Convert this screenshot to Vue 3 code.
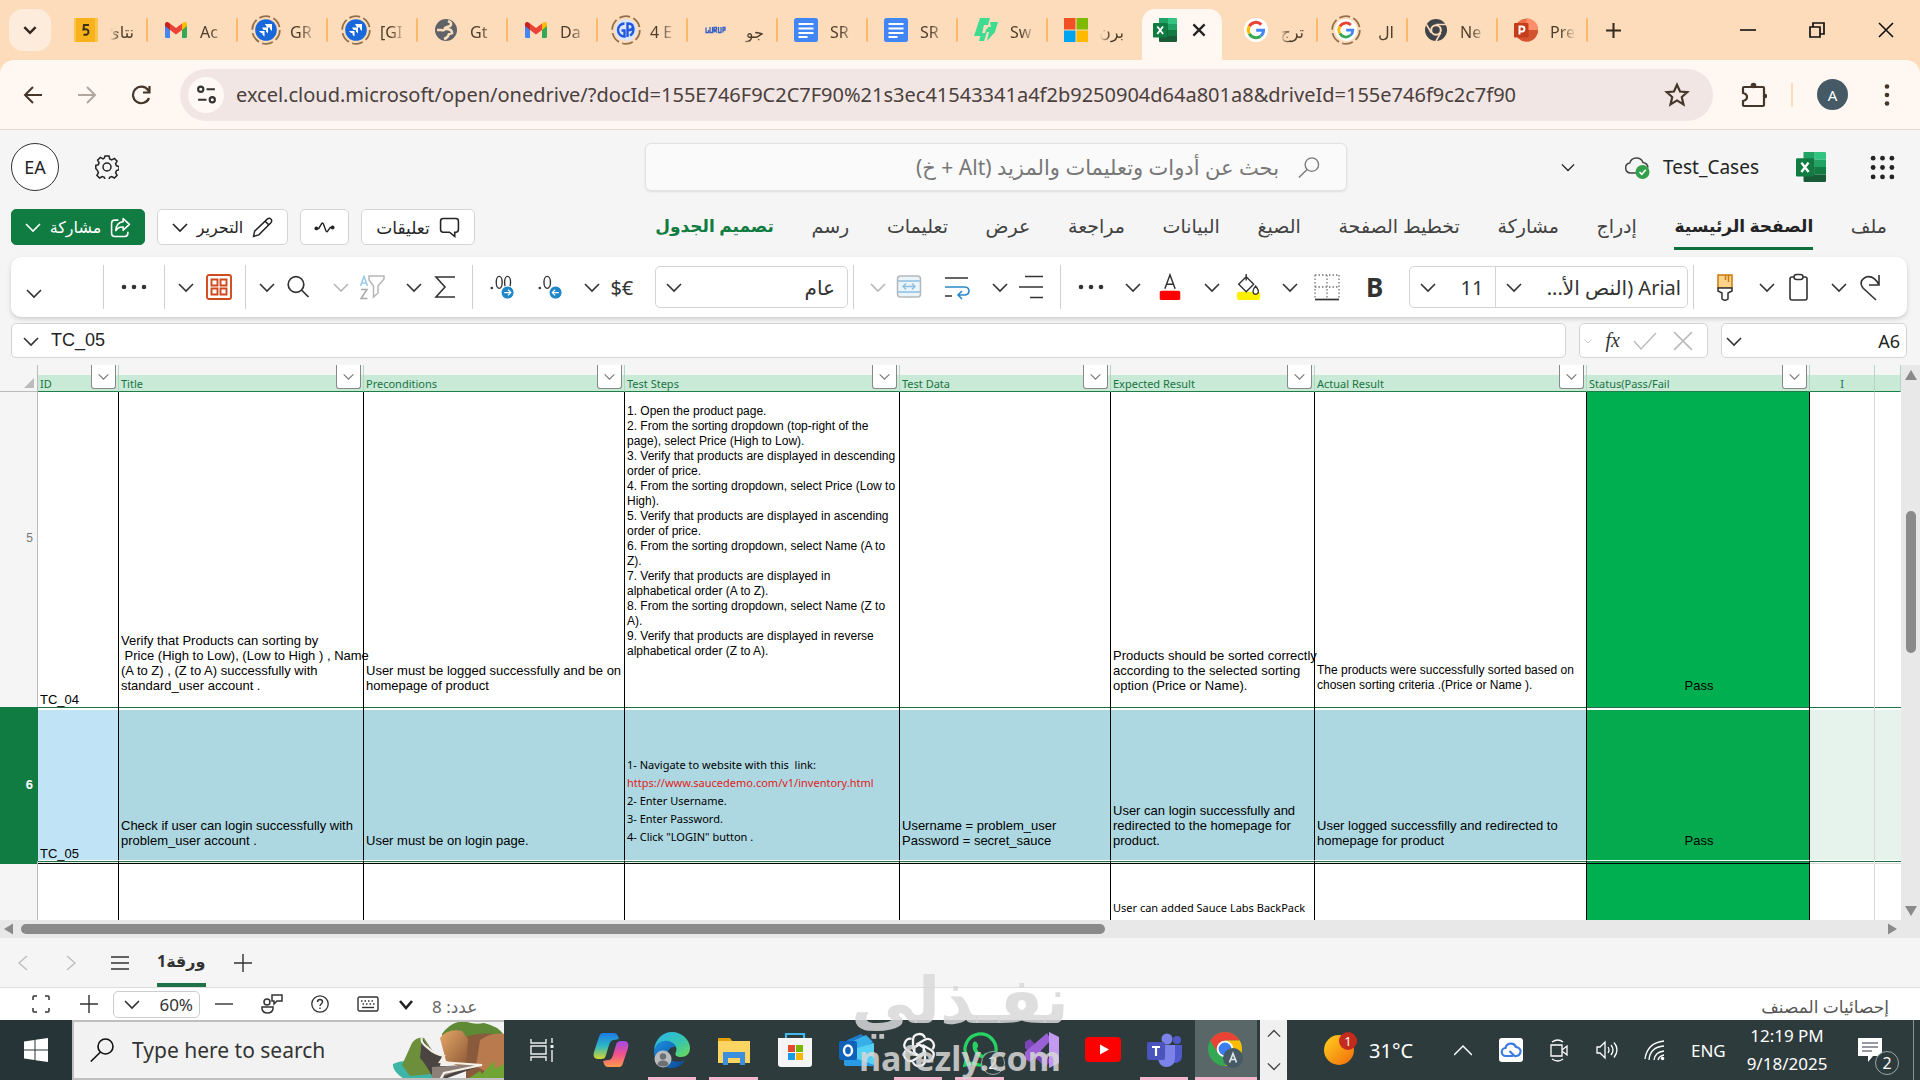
<script setup>
import { ref } from 'vue'

const browserTabs = [
  { icon: 'five', title: 'نتائ', rtl: true },
  { icon: 'gmail', title: 'Ac' },
  { icon: 'jira', title: 'GR' },
  { icon: 'jira', title: '[GI' },
  { icon: 'globe', title: 'Gt' },
  { icon: 'gmail', title: 'Da' },
  { icon: 'gp', title: '4 E' },
  { icon: 'guru', title: 'جو', rtl: true },
  { icon: 'docs', title: 'SR' },
  { icon: 'docs', title: 'SR' },
  { icon: 'swag', title: 'Sw' },
  { icon: 'ms', title: 'برن', rtl: true },
  { icon: 'excel', title: '', active: true },
  { icon: 'google', title: 'ترج', rtl: true },
  { icon: 'googlering', title: 'ال', rtl: true },
  { icon: 'chromegray', title: 'Ne' },
  { icon: 'ppt', title: 'Pre' },
]

const ribbonTabs = [
  'ملف', 'الصفحة الرئيسية', 'إدراج', 'مشاركة', 'تخطيط الصفحة', 'الصيغ',
  'البيانات', 'مراجعة', 'عرض', 'تعليمات', 'رسم', 'تصميم الجدول',
]
const activeTab = ref('الصفحة الرئيسية')

const columns = ['ID', 'Title', 'Preconditions', 'Test Steps', 'Test Data', 'Expected Result', 'Actual Result', 'Status(Pass/Fail']

const rows = [
  {
    number: 5,
    name: 'first',
    cells: [
      'TC_04',
      'Verify that Products can sorting by\n Price (High to Low), (Low to High ) , Name\n(A to Z) , (Z to A) successfully with\nstandard_user account .',
      'User must be logged successfully and be on\nhomepage of product',
      '1. Open the product page.\n2. From the sorting dropdown (top-right of the\npage), select Price (High to Low).\n3. Verify that products are displayed in descending\norder of price.\n4. From the sorting dropdown, select Price (Low to\nHigh).\n5. Verify that products are displayed in ascending\norder of price.\n6. From the sorting dropdown, select Name (A to\nZ).\n7. Verify that products are displayed in\nalphabetical order (A to Z).\n8. From the sorting dropdown, select Name (Z to\nA).\n9. Verify that products are displayed in reverse\nalphabetical order (Z to A).',
      '',
      'Products should be sorted correctly\naccording to the selected sorting\noption (Price or Name).',
      'The products were successfully sorted based on\nchosen sorting criteria .(Price or Name ).',
      'Pass',
    ],
  },
  {
    number: 6,
    name: 'selected',
    cells: [
      'TC_05',
      'Check if user can login successfully with\nproblem_user account .',
      'User must be on login page.',
      '',
      'Username = problem_user\nPassword = secret_sauce',
      'User can login successfully and\nredirected to the homepage for\nproduct.',
      'User logged successfilly and redirected to\nhomepage for product',
      'Pass',
    ],
  },
  {
    number: '',
    name: 'last',
    cells: ['', '', '', '', '', 'User can added Sauce Labs BackPack', '', ''],
  },
]

const apps = [
  { icon: 'copilot', label: 'Copilot' },
  { icon: 'edge', label: 'Edge', open: true },
  { icon: 'folder', label: 'File Explorer', open: true },
  { icon: 'store', label: 'Microsoft Store' },
  { icon: 'outlook', label: 'Outlook' },
  { icon: 'gpt', label: 'ChatGPT', open: true },
  { icon: 'whatsapp', label: 'WhatsApp', open: true },
  { icon: 'vs', label: 'Visual Studio' },
  { icon: 'youtube', label: 'YouTube' },
  { icon: 'teams', label: 'Teams', open: true },
  { icon: 'chrome', label: 'Chrome', open: true, current: true },
]

const address = ref('excel.cloud.microsoft/open/onedrive/?docId=155E746F9C2C7F90%21s3ec41543341a4f2b9250904d64a801a8&driveId=155e746f9c2c7f90')
const formula = ref('TC_05')
const cellName = ref('A6')
</script>

<template>
  <div class="screen">
    <svg class="sprite" aria-hidden="true">
      <defs>
        <linearGradient id="gEdge" x1="0" y1="0" x2="1" y2="1"><stop offset="0" stop-color="#2bb5f0" /><stop offset=".55" stop-color="#35c5b0" /><stop offset="1" stop-color="#6fdc50" /></linearGradient>
        <linearGradient id="gEdge2" x1="0" y1="0" x2="1" y2="1"><stop offset="0" stop-color="#1b8fe0" /><stop offset="1" stop-color="#0c4a9a" /></linearGradient>
        <linearGradient id="gCopA" x1="0" y1="0" x2="0" y2="1"><stop offset="0" stop-color="#1b7be8" /><stop offset=".5" stop-color="#2cb6c4" /><stop offset="1" stop-color="#d6d62c" /></linearGradient>
        <linearGradient id="gCopB" x1="0" y1="0" x2="0" y2="1"><stop offset="0" stop-color="#a44ae8" /><stop offset=".5" stop-color="#f0508c" /><stop offset="1" stop-color="#ff9a4a" /></linearGradient>
        <linearGradient id="gSun" x1="0" y1="0" x2="1" y2="1"><stop offset="0" stop-color="#ffd21f" /><stop offset="1" stop-color="#f06a0a" /></linearGradient>
        <linearGradient id="gRock" x1="0" y1="0" x2="1" y2="1"><stop offset="0" stop-color="#e6a766" /><stop offset="1" stop-color="#8a5636" /></linearGradient>
      </defs>
      <symbol id="chevron" viewBox="0 0 16 16"><path d="M1 5l7 7 7-7" fill="none" stroke="currentColor" stroke-width="1.6" /></symbol>
      <symbol id="five" viewBox="0 0 24 24"><path fill="#f9b21c" d="M0 0h24v24H0z" /><path fill="#fcc64c" d="M21 0h3v24h-3zM0 0h2v24H0z" /><path d="M15 7h-5l-.5 4.500c3.500-1 5 .5 5 2.600 0 2.400-2.600 3.400-5 2.200" fill="none" stroke="#3b3212" stroke-width="2" /></symbol>
      <symbol id="gmail" viewBox="0 0 24 24"><path fill="#4285f4" d="M1 7l5 4v9H2.500Q1 20 1 18.500z" /><path fill="#34a853" d="M18 11l5-4v11.500q0 1.500-1.500 1.500H18z" /><path fill="#fbbc04" d="M18 5.500l2-1.300c1.500-.8 3 .3 3 1.800v2l-5 4z" /><path fill="#ea4335" d="M6 5.500l6 4.500 6-4.500V12l-6 4.500L6 12z" /><path fill="#c5221f" d="M1 6c0-1.500 1.500-2.600 3-1.800l2 1.300V12L1 8z" /></symbol>
      <symbol id="jira" viewBox="0 0 30 30"><circle cx="15" cy="15" r="13.800" fill="none" stroke="#93704a" stroke-width="1.800" stroke-dasharray="11 3.450" /><circle cx="15" cy="15" r="10.800" fill="#1868db" /><path fill="#fff" d="M14 9h7v7l-2-2v-1.500h-3zM11 12.500h6v6l-2-2V15h-2.500zM8 16h5.500v5.500l-2-1.800V18H10z" /></symbol>
      <symbol id="gp" viewBox="0 0 30 30"><circle cx="15" cy="15" r="13.800" fill="none" stroke="#93704a" stroke-width="1.800" stroke-dasharray="11 3.450" /><circle cx="15" cy="15" r="10.800" fill="#dbe6fb" /><path d="M13.500 8.500a6.500 6.500 0 1 0 0 13v-6h-3M16.500 22V8.500c7 0 7 6.800 0 6.800M19 20.500c4-2 4.500-8 1.500-11" fill="none" stroke="#2257e0" stroke-width="2.400" /></symbol>
      <symbol id="globe" viewBox="0 0 24 24"><circle cx="12" cy="12" r="11" fill="#5f6368" /><path d="M14 3q5 2 2 5-3 1-5 2 0 3-4 2l-4 0M12 11q6 0 6 4l-3 1q-1 4-5 5" fill="none" stroke="#fcdcbb" stroke-width="2.600" /></symbol>
      <symbol id="guru" viewBox="0 0 24 24"><path d="M2 9.500v5h2.500v-2.500M6 9v5.500h2.500V9M10 14.500V9.500h2.500v2.500H10l3 2.500M14.500 9v5.500H17V9M19 14.500V9.500h2v2.500h-2" fill="none" stroke="#3560c8" stroke-width="1.300" /></symbol>
      <symbol id="docs" viewBox="0 0 24 24"><rect width="24" height="24" rx="2.500" fill="#4285f4" /><path d="M4.500 6h15M4.500 10.500h15M4.500 15h15M4.500 19h9" stroke="#fff" stroke-width="1.900" /></symbol>
      <symbol id="swag" viewBox="0 0 24 24"><path fill="#3ddc91" d="M6 0h10l-2 7h-4l-1 4h5l-4 12H5l1.500-5H0l3-9z" /><path fill="#3ddc91" d="M16 4h8l-3 10-8 9 2-9h-3l2-5h3z" /><path fill="#fcdcbb" d="M10 9h3l-2 6H8z" /></symbol>
      <symbol id="ms" viewBox="0 0 24 24"><path fill="#f25022" d="M0 0h11.500v11.500H0z" /><path fill="#7fba00" d="M12.500 0H24v11.500H12.500z" /><path fill="#00a4ef" d="M0 12.500h11.500V24H0z" /><path fill="#ffb900" d="M12.500 12.500H24V24H12.500z" /></symbol>
      <symbol id="excel" viewBox="0 0 24 24"><path fill="#21a366" d="M6 0h9v6H6z" /><path fill="#33c481" d="M15 0h8q1 0 1 1v5h-9z" /><path fill="#107c41" d="M6 6h9v6H6zM15 12h9v6h-9z" /><path fill="#21a366" d="M15 6h9v6h-9z" /><path fill="#185c37" d="M6 12h9v6h9v5q0 1-1 1H7q-1 0-1-1z" /><rect y="5" width="14.500" height="14.500" rx="1" fill="#107c41" /><path d="M4.300 8.500l5.800 7.500M10 8.500L4.300 16" stroke="#fff" stroke-width="1.900" /></symbol>
      <symbol id="google" viewBox="0 0 24 24"><circle cx="12" cy="12" r="12" fill="#fff" /><path d="M5.300 8.200A7.600 7.600 0 0 1 17.300 6.600" fill="none" stroke="#ea4335" stroke-width="3" /><path d="M5.300 8.200a7.600 7.600 0 0 0 0 7.600" fill="none" stroke="#fbbc05" stroke-width="3" /><path d="M5.300 15.800a7.600 7.600 0 0 0 11.600 2" fill="none" stroke="#34a853" stroke-width="3" /><path d="M16.900 17.800a7.400 7.400 0 0 0 2.600-5.600H12.200" fill="none" stroke="#4285f4" stroke-width="3" /></symbol>
      <symbol id="googlering" viewBox="0 0 30 30"><circle cx="15" cy="15" r="13.800" fill="none" stroke="#93704a" stroke-width="1.800" stroke-dasharray="11 3.450" /><use href="#google" x="4" y="4" width="22" height="22" /></symbol>
      <symbol id="chromegray" viewBox="0 0 24 24"><circle cx="12" cy="12" r="11" fill="#404448" /><circle cx="12" cy="12" r="5.800" fill="#fcdcbb" /><circle cx="12" cy="12" r="3.800" fill="#404448" /><path d="M12 6.500h10M7.300 14.800L2.500 6.500M16.700 14.800L12 23" stroke="#fcdcbb" stroke-width="1.600" /></symbol>
      <symbol id="ppt" viewBox="0 0 24 24"><circle cx="12.500" cy="12" r="11.500" fill="#ed6c47" /><path fill="#ff8f6b" d="M12.500.5A11.500 11.500 0 0 1 24 12H12.500z" /><path fill="#d35230" d="M1 12h23a11.500 11.500 0 0 1-23 0z" /><rect y="5" width="14.500" height="14.500" rx="1" fill="#c43e1c" /><path d="M5.500 16.500v-8h2.500q2.500 0 2.500 2.500t-2.500 2.500H5.500" fill="none" stroke="#fff" stroke-width="1.900" /></symbol>

      <symbol id="copilot" viewBox="0 0 36 36"><path fill="url(#gCopA)" d="M10 1h11c3 0 4 3 5 6l-5 1c-3 0-4 2-5 5l-3 10c-1 3-2 4-5 4H5c-4 0-5-3-4-7L6 5c1-3 2-4 4-4z" /><path fill="url(#gCopB)" d="M26 35H15c-3 0-4-3-5-6l5-1c3 0 4-2 5-5l3-10c1-3 2-4 5-4h3c4 0 5 3 4 7l-5 15c-1 3-2 4-4 4z" /></symbol>
      <symbol id="edge" viewBox="0 0 36 36"><path fill="url(#gEdge2)" d="M0 20C0 12 6 8 13 8c6 0 9 4 9 7-5-1-9 3-8 8 1 6 8 9 17 5-3 5-8 8-13 8C8 36 0 29 0 20z" /><path fill="url(#gEdge)" d="M0 18C1 8 8 0 18 0s18 8 18 16c0 6-4 9-9 9-4 0-7-2-5-5 2-5-2-10-8-11C7 8 2 12 0 18z" /><circle cx="9" cy="27" r="8.500" fill="#b9bdbf" /><circle cx="9" cy="24.500" r="3.200" fill="#6d7173" /><path fill="#6d7173" d="M3.500 33q0-4.500 5.500-4.500t5.500 4.500q-5.500 3-11 0z" /></symbol>
      <symbol id="folder" viewBox="0 0 36 36"><path fill="#e3a008" d="M2 6h12l3 4h17v6H2z" /><path fill="#fcd462" d="M2 9h32v22H2z" /><path fill="#3c8fdc" d="M7 20h22v13h-5v-7H12v7H7z" /></symbol>
      <symbol id="store" viewBox="0 0 36 36"><path d="M9 8V2h18v6" fill="none" stroke="#43b6ec" stroke-width="2.200" /><path fill="#f5f5f5" d="M1 6h34v26q0 3-3 3H4q-3 0-3-3z" /><path fill="#e64a2e" d="M11 13h7v7h-7z" /><path fill="#7ab800" d="M19 13h7v7h-7z" /><path fill="#1a9be8" d="M11 21h7v7h-7z" /><path fill="#f9b600" d="M19 21h7v7h-7z" /></symbol>
      <symbol id="outlook" viewBox="0 0 36 36"><path fill="#1f78c8" d="M8 8L22 2l12 9v12H8z" /><path fill="#37b0ea" d="M14 9l13-6 7 7-15 9z" /><path fill="#54d0f5" d="M5 20l30-9v20q0 3-3 3H8q-3 0-3-3z" /><path fill="#2a9be6" d="M5 22l30 11q-2 2-5 1H8q-3 0-3-3z" /><rect y="9" width="18" height="19" rx="2" fill="#0f62b8" /><ellipse cx="9" cy="18.500" rx="4" ry="5" fill="none" stroke="#fff" stroke-width="2.400" /></symbol>
      <symbol id="gpt" viewBox="0 0 36 36"><g fill="none" stroke="#f4f4f4" stroke-width="2.300"><path id="petal" d="M18 12.500l-6 3.500v-8c0-7 10-8 12-2" /><use href="#petal" transform="rotate(60 18 18)" /><use href="#petal" transform="rotate(120 18 18)" /><use href="#petal" transform="rotate(180 18 18)" /><use href="#petal" transform="rotate(240 18 18)" /><use href="#petal" transform="rotate(300 18 18)" /><path d="M18 12.500l5 3v6l-5 3-5-3v-6z" /></g></symbol>
      <symbol id="whatsapp" viewBox="0 0 36 36"><path d="M3 33l2-8a15.500 15.500 0 1 1 6 6z" fill="none" stroke="#28d366" stroke-width="3.200" /><path fill="#28d366" d="M11 11c2-3 4-1 5 2 1 2-2 3-1 4 1 3 4 5 6 6 1 0 2-3 4-2 3 1 3 3 1 5-5 4-18-5-15-15z" /></symbol>
      <symbol id="vs" viewBox="0 0 36 36"><path fill="#7b45b8" d="M1 10l5-3 21 22-6 6L1 16z" /><path fill="#9a62d6" d="M1 27l5 3L27 8l-4-7L1 20z" /><path fill="#c39af0" d="M25 0l10 5v26l-10 5z" /></symbol>
      <symbol id="youtube" viewBox="0 0 36 36"><rect y="5" width="36" height="25" rx="4" fill="#f00" /><path fill="#fff" d="M15 12.500l9 5-9 5z" /></symbol>
      <symbol id="teams" viewBox="0 0 36 36"><circle cx="20" cy="7" r="5.500" fill="#7b83eb" /><circle cx="30" cy="8" r="4" fill="#5059c9" /><path fill="#5059c9" d="M24 13h11v12q-1 6-8 6z" /><path fill="#7b83eb" d="M11 13h17v14q-1 8-9 8-6 0-8-8z" /><rect y="10" width="18" height="18" rx="2" fill="#4b53bc" /><path d="M5 15h8M9 15v9" stroke="#fff" stroke-width="2.200" /></symbol>
      <symbol id="chrome" viewBox="0 0 36 36"><circle cx="17" cy="17" r="17" fill="#34a853" /><path fill="#ea4335" d="M2.300 8.500A17 17 0 0 1 31.700 8.500H17L10 21z" /><path fill="#fbbc05" d="M31.700 8.500A17 17 0 0 1 17 34l7.500-13L17 8.500z" /><circle cx="17" cy="17" r="8.300" fill="#fff" /><circle cx="17" cy="17" r="6.400" fill="#3a7df0" /><circle cx="25" cy="26" r="10" fill="#455a64" /><path d="M21.500 30.500l3.500-9 3.500 9M22.700 27.500h4.600" fill="none" stroke="#dfe5e8" stroke-width="1.700" /></symbol>
    </svg>

    <!-- browser -->
    <div class="browser">
      <header class="tabstrip">
        <button class="tabsearch" aria-label="Search tabs"><svg viewBox="0 0 16 16"><path d="M3 5.500l5 5 5-5" fill="none" stroke="currentColor" stroke-width="2.200" /></svg></button>
        <div class="tabs">
          <button v-for="(tab, index) in browserTabs" :key="index" class="tab" :class="{ active: tab.active, plain: index === 11 }" :aria-label="tab.title || 'Test_Cases'">
            <span class="favicon"><svg :class="{ ring: ['jira', 'gp', 'googlering'].includes(tab.icon) }"><use :href="'#' + tab.icon" /></svg></span>
            <span v-if="!tab.active" class="tabtitle" :class="{ rtl: tab.rtl }">{{ tab.title }}</span>
            <svg v-else class="tabclose" viewBox="0 0 16 16"><path d="M3 3l10 10M13 3L3 13" stroke="currentColor" stroke-width="2" /></svg>
          </button>
        </div>
        <button class="newtab" aria-label="New tab"><svg viewBox="0 0 16 16"><path d="M8 1v14M1 8h14" stroke="currentColor" stroke-width="1.900" /></svg></button>
        <div class="windowbuttons">
          <button aria-label="Minimize"><svg viewBox="0 0 16 16"><path d="M0 8h16" stroke="currentColor" stroke-width="1.600" /></svg></button>
          <button aria-label="Restore"><svg viewBox="0 0 16 16"><path d="M1 5h10v10H1zM4 5V1h11v11h-4" fill="none" stroke="currentColor" stroke-width="1.700" /></svg></button>
          <button aria-label="Close"><svg viewBox="0 0 16 16"><path d="M1 1l14 14M15 1L1 15" stroke="currentColor" stroke-width="1.600" /></svg></button>
        </div>
      </header>

      <div class="addressbar">
        <button aria-label="Back"><svg viewBox="0 0 20 20"><path d="M19 10H2M10 2l-8 8 8 8" fill="none" stroke="currentColor" stroke-width="2" /></svg></button>
        <button class="dim" aria-label="Forward"><svg viewBox="0 0 20 20"><path d="M1 10h17M10 2l8 8-8 8" fill="none" stroke="currentColor" stroke-width="2" /></svg></button>
        <button aria-label="Reload"><svg viewBox="0 0 20 20"><path d="M18 13a8.300 8.300 0 1 1-1-8l1.500 2M18.500 1v6.500H12" fill="none" stroke="currentColor" stroke-width="2.200" /></svg></button>
        <div class="omnibox">
          <button class="siteinfo" aria-label="Site information"><svg viewBox="0 0 20 20"><g fill="none" stroke="currentColor" stroke-width="2"><circle cx="4.500" cy="5" r="2.500" /><path d="M10 5h8M2 15h8" /><circle cx="15.500" cy="15" r="2.500" /></g></svg></button>
          <input v-model="address" class="url" aria-label="Address" spellcheck="false">
          <button class="star" aria-label="Bookmark"><svg viewBox="0 0 24 24"><path d="M12 2.500l2.800 6.300 6.700.6-5.100 4.500 1.600 6.800-6-3.700-6 3.700 1.600-6.800-5.100-4.500 6.700-.6z" fill="none" stroke="currentColor" stroke-width="2" /></svg></button>
        </div>
        <button class="puzzle" aria-label="Extensions"><svg viewBox="0 0 26 26"><path d="M3 5h19q1 0 1 1v17q0 1-1 1H3q-1 0-1-1v-4q4-1 4-4t-4-4V6q0-1 1-1z" fill="none" stroke="currentColor" stroke-width="2.200" /><circle cx="12.500" cy="3.500" r="2.800" fill="currentColor" /><circle cx="24" cy="14" r="2.200" fill="currentColor" /></svg></button>
        <span class="bar"></span>
        <button class="profile">A</button>
        <button class="menu" aria-label="Menu"><svg viewBox="0 0 24 24"><g fill="currentColor"><circle cx="12" cy="3.500" r="2.300" /><circle cx="12" cy="12" r="2.300" /><circle cx="12" cy="20.500" r="2.300" /></g></svg></button>
      </div>
    </div>

    <!-- title row -->
    <div class="titlerow">
      <div class="account">
        <button class="avatar">EA</button>
        <button class="gear" aria-label="Settings"><svg viewBox="0 0 24 24"><g fill="none" stroke="currentColor" stroke-width="1.500"><path d="M10 1h4l.7 3 2 .9 2.700-1.500 2.700 2.700-1.500 2.700.9 2 2.500.8v3.200l-2.500.8-.9 2 1.500 2.700-2.700 2.700-2.700-1.500-2 .9-.7 2.300h-4l-.7-2.300-2-.9-2.700 1.500-2.700-2.700 1.500-2.700-.9-2L0.800 13.500v-3.200l2.400-.5.9-2-1.500-2.700 2.700-2.700L8 3.900l1.300-.9z" /><circle cx="12" cy="12" r="4" /></g></svg></button>
      </div>
      <label class="search" dir="rtl">
        <svg viewBox="0 0 24 24"><path d="M15.500 2a7 7 0 1 1 0 14 7 7 0 0 1 0-14zM10.500 14L2 22.500" fill="none" stroke="currentColor" stroke-width="1.400" /></svg>
        <input type="search" placeholder="بحث عن أدوات وتعليمات والمزيد (Alt + خ)" aria-label="بحث">
      </label>
      <div class="docinfo">
        <button class="titlechev" aria-label="File details"><svg><use href="#chevron" /></svg></button>
        <svg class="cloud" viewBox="0 0 26 24"><path d="M12 18H6.500a5 5 0 0 1-.8-9.900A7 7 0 0 1 19 7.500q4.500.8 5 5" fill="none" stroke="#444" stroke-width="1.500" /><circle cx="18.500" cy="17" r="7" fill="#35a04c" /><path d="M15.500 17l2.300 2.300 4-4.500" fill="none" stroke="#fff" stroke-width="1.500" /></svg>
        <span class="docname">Test_Cases</span>
        <svg class="excelicon"><use href="#excel" /></svg>
        <button class="waffle" aria-label="Apps"><svg viewBox="0 0 24 24"><g fill="currentColor"><template v-for="y in 3" :key="y"><circle v-for="x in 3" :key="x" :cx="x * 9 - 6" :cy="y * 9 - 6" r="2.300" /></template></g></svg></button>
      </div>
    </div>

    <!-- ribbon tabs -->
    <div class="tabrow">
      <button class="share"><svg class="chev"><use href="#chevron" /></svg><span>مشاركة</span><svg viewBox="0 0 20 20"><path d="M8 3H4.500Q1.500 3 1.500 6v9.500q0 3 3 3H14q3 0 3-3V14M12.500 1.500l6 5.500-6 5.500V9.500Q8 9 5.500 13 6 5 12.500 4.500z" fill="none" stroke="currentColor" stroke-width="1.500" stroke-linejoin="round" /></svg></button>
      <button class="edit"><svg class="chev"><use href="#chevron" /></svg><span>التحرير</span><svg viewBox="0 0 20 20"><path d="M1.500 18.500l1-5L14.500 2q2-1.500 3.500 0t0 3.500L6.500 17zM12.500 4l3.500 3.500" fill="none" stroke="currentColor" stroke-width="1.400" /></svg></button>
      <button class="wave" aria-label="Activity"><svg viewBox="0 0 22 14"><path d="M3 8h2l3-5q1-1.500 2 .5l2.500 7q.8 2 2 0L17 7h2" fill="none" stroke="currentColor" stroke-width="1.500" /><circle cx="2.500" cy="8" r="2" fill="currentColor" /><circle cx="19.500" cy="7" r="2" fill="currentColor" /></svg></button>
      <button class="comments"><span>تعليقات</span><svg viewBox="0 0 20 20"><path d="M4 1.500h12q2.500 0 2.500 2.500v8q0 2.500-2.500 2.500h-1v4l-5-4H4Q1.500 14.500 1.500 12V4Q1.500 1.500 4 1.500z" fill="none" stroke="currentColor" stroke-width="1.500" /></svg></button>
      <nav dir="rtl">
        <a v-for="tab in ribbonTabs" :key="tab" href="#" :class="{ current: tab === activeTab, design: tab === 'تصميم الجدول' }" @click.prevent="activeTab = tab">{{ tab }}</a>
      </nav>
    </div>

    <!-- ribbon -->
    <div class="ribbon">
      <div class="group collapse"><button aria-label="Collapse ribbon"><svg class="chev low"><use href="#chevron" /></svg></button></div>
      <div class="group more"><svg class="dots" viewBox="0 0 28 8"><g fill="currentColor"><circle cx="4" cy="4" r="2.300" /><circle cx="14" cy="4" r="2.300" /><circle cx="24" cy="4" r="2.300" /></g></svg></div>
      <div class="group addins">
        <svg class="chev"><use href="#chevron" /></svg>
        <svg class="ico" viewBox="0 0 26 26"><g fill="none" stroke="#d04a1e" stroke-width="1.900"><rect x="1" y="1" width="24" height="24" rx="2" /><path d="M5.500 5.500h6v6h-6zM14.500 5.500h6v6h-6zM5.500 14.500h6v6h-6zM14.500 14.500h6v6h-6z" /></g></svg>
      </div>
      <div class="group editing">
        <span class="pair"><svg class="chev"><use href="#chevron" /></svg><svg class="ico" viewBox="0 0 26 26"><circle cx="11" cy="10.500" r="7.800" fill="none" stroke="currentColor" stroke-width="1.700" /><path d="M16.500 16l7 7" stroke="currentColor" stroke-width="1.700" /></svg></span>
        <span class="pair"><svg class="chev faded"><use href="#chevron" /></svg><svg class="ico" viewBox="0 0 26 26"><g fill="none" stroke-width="1.500"><path d="M1.500 12L5 2.500 8.500 12M2.500 9h5" stroke="#9cc9ea" /><path d="M2 15.500h6l-6 9h6.500" stroke="#aaa" /><path d="M10 2h15v3l-6 7v7l-4.500 4V12L10 6z" stroke="#b5b5b5" /></g></svg></span>
        <span class="pair"><svg class="chev"><use href="#chevron" /></svg><svg class="ico" viewBox="0 0 26 26"><path d="M23 3H4l9 10-9 10h19" fill="none" stroke="currentColor" stroke-width="1.600" /></svg></span>
      </div>
      <div class="group number">
        <svg class="ico" viewBox="0 0 28 28"><g fill="none" stroke="currentColor" stroke-width="1.500"><ellipse cx="11" cy="9" rx="3.200" ry="6.500" /><ellipse cx="20" cy="9" rx="3.200" ry="6.500" /></g><circle cx="3" cy="15" r="1.400" fill="currentColor" /><circle cx="20" cy="20" r="7" fill="#1f86c8" stroke="#fff" /><path d="M16.500 20h6.500M20.500 17l3 3-3 3" fill="none" stroke="#fff" stroke-width="1.300" /></svg>
        <svg class="ico" viewBox="0 0 28 28"><ellipse cx="11" cy="9" rx="3.500" ry="6.500" fill="none" stroke="currentColor" stroke-width="1.500" /><circle cx="3" cy="15" r="1.400" fill="currentColor" /><circle cx="20" cy="20" r="7" fill="#1f86c8" stroke="#fff" /><path d="M17 20h6.500M19.500 17l-3 3 3 3" fill="none" stroke="#fff" stroke-width="1.300" /></svg>
        <span class="pair"><svg class="chev"><use href="#chevron" /></svg><span class="currency">$€</span></span>
        <label class="pick format"><svg class="chev"><use href="#chevron" /></svg><select dir="rtl" aria-label="Number format"><option>عام</option></select></label>
      </div>
      <div class="group align">
        <span class="pair"><svg class="chev faded"><use href="#chevron" /></svg><svg class="ico" viewBox="0 0 26 26"><rect x="1.500" y="2" width="23" height="21" rx="3" fill="#eaf4fb" stroke="#b5b8ba" stroke-width="1.500" /><path d="M2 7h22M2 18h22M7 12.500h12M10 9.500l-3 3 3 3M16 9.500l3 3-3 3" fill="none" stroke="#8dbfe0" stroke-width="1.400" /></svg></span>
        <svg class="ico" viewBox="0 0 26 26"><path d="M1 4h23M1 22h7" stroke="currentColor" stroke-width="1.600" /><path d="M1 13h20q4 .5 4 4t-4 4h-7M18 17l-4 4 4 4" fill="none" stroke="#2b88c8" stroke-width="1.600" /></svg>
        <span class="pair"><svg class="chev"><use href="#chevron" /></svg><svg class="ico" viewBox="0 0 26 26"><path d="M7 2.500h18M1 13h24M12 23.500h13" stroke="currentColor" stroke-width="1.600" /></svg></span>
      </div>
      <div class="group font">
        <svg class="dots" viewBox="0 0 28 8"><g fill="currentColor"><circle cx="4" cy="4" r="2.300" /><circle cx="14" cy="4" r="2.300" /><circle cx="24" cy="4" r="2.300" /></g></svg>
        <span class="pair wide"><svg class="chev"><use href="#chevron" /></svg><svg class="ico" viewBox="0 0 26 30"><path d="M7.500 17L13 2l5.500 15M9.500 12h7" fill="none" stroke="currentColor" stroke-width="1.600" /><rect x="2" y="19" width="22" height="10" rx="2" fill="#f00" /></svg></span>
        <span class="pair wide"><svg class="chev"><use href="#chevron" /></svg><svg class="ico" viewBox="0 0 26 30"><rect y="20" width="25" height="9" rx="3" fill="#ffef00" /><path d="M10 4l8 8-8 8-8-8zM10 1v7" fill="#fff" stroke="currentColor" stroke-width="1.500" /><path d="M20 14q5 6 2 8-2 1.500-4 0-2-3 2-8z" fill="#fff" stroke="currentColor" stroke-width="1.500" /></svg></span>
        <span class="pair wide"><svg class="chev"><use href="#chevron" /></svg><svg class="ico" viewBox="0 0 26 28"><path d="M1 2h24M1 14h24M1 2v23M13 2v23M25 2v23" stroke="#777" stroke-width="1.300" stroke-dasharray="1.500 2" /><path d="M1 26.500h24" stroke="#333" stroke-width="1.700" /></svg></span>
        <button class="bold">B</button>
        <div class="fontbox">
          <label class="pick size"><svg class="chev"><use href="#chevron" /></svg><select dir="rtl" aria-label="Font size"><option>11</option></select></label>
          <label class="pick family"><svg class="chev"><use href="#chevron" /></svg><select dir="rtl" aria-label="Font"><option>Arial (النص الأ...</option></select></label>
        </div>
      </div>
      <div class="group clipboard">
        <svg class="ico" viewBox="0 0 26 28"><path d="M6 2h14v13H6z" fill="#fbd48a" stroke="#c97a12" stroke-width="1.500" /><path d="M13.500 2v5M16.500 2v7" stroke="#c97a12" stroke-width="1.500" /><path d="M6 15v3l4 2V26q3 2.500 6 0v-6l4-2v-3z" fill="#fff" stroke="#333" stroke-width="1.500" /></svg>
        <span class="pair"><svg class="chev"><use href="#chevron" /></svg><svg class="ico" viewBox="0 0 26 28"><rect x="5" y="4" width="17" height="23" rx="2" fill="none" stroke="currentColor" stroke-width="1.600" /><rect x="9" y="1.500" width="9" height="5" rx="2.500" fill="#fff" stroke="currentColor" stroke-width="1.500" /></svg></span>
        <span class="pair"><svg class="chev"><use href="#chevron" /></svg><svg class="ico" viewBox="0 0 26 28"><path d="M22 2v10H12M22 12Q17 2 9 4 1 8 6 15l13 12" fill="none" stroke="currentColor" stroke-width="1.600" /></svg></span>
      </div>
    </div>

    <!-- formula bar -->
    <div class="formularow">
      <label class="box formula"><svg class="chev"><use href="#chevron" /></svg><input v-model="formula" aria-label="Formula"></label>
      <div class="box fx">
        <svg class="chev tiny"><use href="#chevron" /></svg><i>fx</i>
        <svg class="mark" viewBox="0 0 24 18"><path d="M1 9l7 8L23 1" fill="none" stroke="currentColor" stroke-width="1.400" /></svg>
        <svg class="mark" viewBox="0 0 18 18"><path d="M1 1l16 16M17 1L1 17" stroke="currentColor" stroke-width="1.400" /></svg>
      </div>
      <label class="box namebox"><svg class="chev"><use href="#chevron" /></svg><input v-model="cellName" aria-label="Name box"></label>
    </div>

    <!-- sheet -->
    <main class="sheet">
      <div class="tablewrap">
        <div class="viewport">
          <table>
            <colgroup><col class="c-num"><col v-for="n in 8" :key="n" :class="'c-' + n"><col class="c-9"><col></colgroup>
            <thead>
              <tr>
                <th class="corner"><svg viewBox="0 0 10 10"><path d="M10 0v10H0z" fill="#bbb" /></svg></th>
                <th v-for="name in columns" :key="name"><div class="head">{{ name }}<button class="filter" :aria-label="'Filter ' + name"><svg><use href="#chevron" /></svg></button></div></th>
                <th class="letter">I</th>
                <th></th>
              </tr>
            </thead>
            <tbody>
              <tr v-for="row in rows" :key="row.name" :class="row.name">
                <th class="rownum">{{ row.number }}</th>
                <td v-for="(cell, index) in row.cells" :key="index" :class="'d-' + (index + 1)">
                  <div v-if="row.name === 'selected' && index === 3" class="steps">1- Navigate to website with this&nbsp; link:<br><span class="link">https://www.saucedemo.com/v1/inventory.html</span><br>2- Enter Username.<br>3- Enter Password.<br>4- Click "LOGIN" button .</div>
                  <div v-else class="celltext">{{ cell }}</div>
                </td>
                <td class="blank"></td>
                <td class="blank"></td>
              </tr>
            </tbody>
          </table>
        </div>
        <div class="hscroll">
          <svg viewBox="0 0 10 12"><path d="M10 0v12L0 6z" fill="#8a8a8a" /></svg>
          <div class="thumb"></div>
          <div class="rest"></div>
          <svg viewBox="0 0 10 12"><path d="M0 0v12l10-6z" fill="#8a8a8a" /></svg>
        </div>
      </div>
      <div class="vscroll">
        <svg viewBox="0 0 12 10"><path d="M0 10h12L6 0z" fill="#8a8a8a" /></svg>
        <div class="track"><div class="thumb"></div></div>
        <svg viewBox="0 0 12 10"><path d="M0 0h12L6 10z" fill="#8a8a8a" /></svg>
      </div>
    </main>

    <div class="sheettabs">
      <button class="nav" aria-label="Previous sheet"><svg viewBox="0 0 16 16"><path d="M12 1L4 8l8 7" fill="none" stroke="currentColor" stroke-width="1.300" /></svg></button>
      <button class="nav" aria-label="Next sheet"><svg viewBox="0 0 16 16"><path d="M4 1l8 7-8 7" fill="none" stroke="currentColor" stroke-width="1.300" /></svg></button>
      <button aria-label="All sheets"><svg viewBox="0 0 18 18"><path d="M0 3h18M0 9h18M0 15h18" stroke="currentColor" stroke-width="1.500" /></svg></button>
      <button class="sheetname" dir="rtl">ورقة1</button>
      <button aria-label="Add sheet"><svg viewBox="0 0 18 18"><path d="M9 0v18M0 9h18" stroke="currentColor" stroke-width="1.400" /></svg></button>
    </div>

    <div class="status">
      <button aria-label="Full screen"><svg viewBox="0 0 18 18"><path d="M1 5V2q0-1 1-1h3M13 1h3q1 0 1 1v3M17 13v3q0 1-1 1h-3M5 17H2q-1 0-1-1v-3" fill="none" stroke="currentColor" stroke-width="1.500" /></svg></button>
      <button class="plus" aria-label="Zoom in"><svg viewBox="0 0 18 18"><path d="M9 0v18M0 9h18" stroke="currentColor" stroke-width="1.400" /></svg></button>
      <label class="pick zoom"><svg class="chev"><use href="#chevron" /></svg><select dir="rtl" aria-label="Zoom"><option>60%</option></select></label>
      <button aria-label="Zoom out"><svg viewBox="0 0 18 18"><path d="M0 9h18" stroke="currentColor" stroke-width="1.400" /></svg></button>
      <button class="feedback" aria-label="Feedback"><svg viewBox="0 0 22 20"><g fill="none" stroke="currentColor" stroke-width="1.500"><circle cx="6" cy="8" r="3" /><path d="M1 13h11v2q-1 4-5.500 4T1 15zM11 1h10v6h-5l-3 3V7h-2z" /></g></svg></button>
      <button aria-label="Help"><svg viewBox="0 0 18 18"><circle cx="9" cy="9" r="8.200" fill="none" stroke="currentColor" stroke-width="1.300" /><path d="M6.500 7q0-2.500 2.500-2.500T11.500 7c0 1.500-2.500 2-2.500 4M9 12.500V14" fill="none" stroke="currentColor" stroke-width="1.400" /></svg></button>
      <button class="keys" aria-label="Keyboard"><svg viewBox="0 0 22 16"><rect x="1" y="1" width="20" height="14" rx="1.500" fill="none" stroke="currentColor" stroke-width="1.400" /><path d="M4 5h14M5.500 8h12" stroke="currentColor" stroke-width="1.500" stroke-dasharray="1.500 2" /><path d="M5 11.500h12" stroke="currentColor" stroke-width="1.400" /></svg></button>
      <svg class="chev" viewBox="0 0 16 16"><path d="M2 5l6 7 6-7" fill="none" stroke="#222" stroke-width="2.600" /></svg>
      <span class="count" dir="rtl">عدد: 8</span>
      <span class="stats" dir="rtl">إحصائيات المصنف</span>
    </div>

    <!-- taskbar -->
    <footer class="taskbar">
      <button class="start" aria-label="Start"><svg viewBox="0 0 24 24"><path fill="#fff" d="M0 3.500l10.500-1.500v9.500H0zM11.500 1.800L24 0v11.500H11.500zM0 12.500h10.500V22L0 20.500zM11.500 12.500H24V24l-12.500-1.800z" /></svg></button>
      <label class="tasksearch">
        <svg class="lens" viewBox="0 0 24 24"><circle cx="15.500" cy="8.500" r="7.500" fill="none" stroke="#111" stroke-width="1.600" /><path d="M10.500 14L.8 23.500" stroke="#111" stroke-width="1.600" /></svg>
        <input placeholder="Type here to search" aria-label="Type here to search">
        <svg class="scene" viewBox="0 0 112 60"><path fill="#3fb5a8" d="M1 44q12-6 30 0l12 16H14Q0 52 1 44z" /><path fill="#5f8a35" d="M50 14Q58 2 72 1q10 4 20 2 14 3 20 12v10H50z" /><path fill="#6d8f3c" d="M10 45l10-22q4-6 12-5l8 12v24l-22 2z" /><path fill="#8a5a3c" d="M74 17q14-6 38-2v45H74z" /><path fill="url(#gRock)" d="M48 18Q56 8 70 11l6 8-2 30-20-8z" /><path fill="#b97b4e" d="M88 20q12-8 24-6v34l-14 6-14-8z" /><path fill="#4a4542" d="M30 18q8 14 20 18l-2 10 40 0-38 14h-8q-8-16-14-22z" /><path fill="#8b7f78" d="M40 47l46-3-34 12v4H40z" /><path d="M30 18q-2 4 6 10 6 6 16 8l-4 6 42 3-38 8-4 7" fill="none" stroke="#f6efe6" stroke-width="2.200" /><path fill="#6ea534" d="M74 60l14-9 2 3 12-13 1 8 9-5v16z" /></svg>
      </label>
      <button class="taskview" aria-label="Task view"><svg viewBox="0 0 24 24"><path d="M1 1v4h15V1M1 23v-4h15v4M1 8h15v8H1zM22 0v5M22 12v12" fill="none" stroke="#eee" stroke-width="1.400" /><path fill="#eee" d="M20.500 7h3v3h-3z" /></svg></button>
      <div class="apps">
        <button v-for="app in apps" :key="app.icon" :class="{ open: app.open, current: app.current }" :aria-label="app.label">
          <svg><use :href="'#' + app.icon" /></svg>
          <span v-if="app.icon === 'whatsapp'" class="badge">2</span>
        </button>
      </div>
      <div class="scroller">
        <svg class="up"><use href="#chevron" /></svg>
        <svg><use href="#chevron" /></svg>
      </div>
      <div class="weather">
        <svg viewBox="0 0 30 30"><circle cx="15" cy="15" r="15" fill="url(#gSun)" /></svg><span class="alert">1</span>
        <span>31°C</span>
      </div>
      <div class="tray">
        <svg class="up" viewBox="0 0 18 18"><path d="M0 4l9 9 9-9" fill="none" stroke="currentColor" stroke-width="1.500" /></svg>
        <svg viewBox="0 0 24 24"><rect width="24" height="24" rx="3" fill="#fff" /><path d="M14 18H7a4 4 0 0 1-.5-8A5.500 5.500 0 0 1 17 9q5 1 4.500 5-1 4.500-6 4l-5-5" fill="none" stroke="#3b7be0" stroke-width="2.200" /></svg>
        <svg viewBox="0 0 24 24"><path d="M4 7h11v11H4zM15 12l5-4v9l-5-4M5 4q6-4 11 0M5 21q6 4 11 0" fill="none" stroke="currentColor" stroke-width="1.300" /></svg>
        <svg viewBox="0 0 24 24"><path d="M2 9h3l5-5v16l-5-5H2zM13 9q2 3 0 6M16 7q4 5 0 10M19 4.500q6 7 0 15" fill="none" stroke="currentColor" stroke-width="1.300" /></svg>
        <svg viewBox="0 0 24 24"><path d="M2 21Q4 5 21 3M6 22Q7 9 21 8M11 22q1-8 10-9M15 22q1-4 6-5" fill="none" stroke="currentColor" stroke-width="1.300" /><circle cx="19.500" cy="20.500" r="1.800" fill="currentColor" /></svg>
        <span class="lang">ENG</span>
        <span class="clock">12:19 PM<br>9/18/2025</span>
        <button class="notify" aria-label="Notifications"><svg viewBox="0 0 24 24"><path fill="#fff" d="M0 0h24v18h-9l-5 6v-6H0z" /><path d="M4 5h16M4 9h16M4 13h10" stroke="#334" stroke-width="1.200" /></svg><span class="badge">2</span></button>
      </div>
    </footer>

    <div class="watermark" aria-hidden="true">
      <span class="mark-ar" dir="rtl">نفـذلي</span>
      <span class="mark-en">nafezly.com</span>
    </div>
  </div>
</template>

<style>
body { margin: 0; overflow: hidden; }
</style>

<style scoped>
.screen {
  height: 100vh;
  display: flex;
  flex-direction: column;
  position: relative;
  background: #f5f5f5;
  color: #242424;
  font-family: "Noto Sans", "DejaVu Sans", sans-serif;
  font-size: 18px;
}
.screen > * { flex-shrink: 0; }
.sprite { position: absolute; width: 0; height: 0; }
* { box-sizing: border-box; }
button, input, select { font: inherit; color: inherit; background: none; border: 0; padding: 0; margin: 0; outline: none; }
button { display: flex; align-items: center; justify-content: center; }
svg { display: block; flex-shrink: 0; }
.chev { width: 16px; height: 16px; color: #333; }
.faded { color: #b8b8b8; }

/* browser */
.browser { background: #fcdcbb; }
.tabstrip { height: 60px; display: flex; align-items: center; padding-left: 9px; color: #33281c; }
.tabsearch { width: 42px; height: 42px; border-radius: 14px; background: #fdebdc; }
.tabsearch svg { width: 18px; height: 18px; }
.tabs { display: flex; align-self: stretch; margin-left: 7px; }
.tab { width: 90px; position: relative; justify-content: flex-start; padding-left: 13px; font-size: 16px; }
.tab::after { content: ""; position: absolute; right: 0; top: 18px; height: 24px; width: 2px; background: #fcb968; border-radius: 1px; }
.tab.active::after, .tab.plain::after { display: none; }
.favicon { width: 30px; display: flex; justify-content: center; }
.favicon svg { width: 24px; height: 24px; }
.favicon svg.ring { width: 30px; height: 30px; }
.tabtitle { width: 26px; margin-left: 9px; margin-top: 4px; white-space: nowrap; color: #4d3d2b; text-align: left; mask-image: linear-gradient(to right, #000 40%, transparent); }
.tabtitle.rtl { direction: rtl; text-align: right; width: 24px; mask-image: linear-gradient(to left, #000 60%, transparent); }
.tab.active { width: 80px; height: 51px; margin: 9px 6px 0 4px; align-self: flex-end; background: #fff8f2; border-radius: 13px 13px 0 0; padding: 0 0 9px 8px; color: #222; }
.tabclose { width: 18px; height: 18px; margin-left: 10px; }
.newtab { width: 50px; }
.newtab svg { width: 17px; height: 17px; }
.windowbuttons { margin-left: auto; display: flex; color: #111; }
.windowbuttons button { width: 69px; }
.windowbuttons svg { width: 16px; height: 16px; }

.addressbar { height: 70px; background: #fff8f2; border-bottom: 1px solid #ecd9cd; border-radius: 14px 14px 0 0; display: flex; align-items: center; padding-left: 6px; color: #45362a; }
.addressbar > button { width: 54px; }
.addressbar > button svg { width: 20px; height: 20px; }
.addressbar .dim { color: #b0a69e; }
.omnibox { flex: 1; height: 52px; margin-left: 12px; border-radius: 26px; background: #f1e6e4; display: flex; align-items: center; padding: 0 23px 0 8px; }
.siteinfo { width: 36px; height: 36px; border-radius: 50%; background: #fff8f5; color: #333; }
.siteinfo svg { width: 21px; height: 21px; }
.url { flex: 1; margin: 0 12px; font-size: 20px; color: #4a403c; }
.star svg { width: 26px; height: 26px; }
.addressbar > .puzzle { width: 50px; margin-left: 16px; }
.addressbar > .puzzle svg { width: 26px; height: 26px; }
.bar { width: 2px; height: 24px; background: #fcdcbb; margin: 0 24px 0 12px; }
.addressbar > .profile { width: 31px; height: 31px; border-radius: 50%; background: #455a64; color: #fff; font-size: 15px; }
.addressbar > .menu { width: 24px; margin: 0 21px 0 27px; }
.addressbar > .menu svg { width: 24px; height: 24px; }

/* title row */
.titlerow { height: 74px; display: flex; align-items: center; }
.account { flex: 634 1 0; display: flex; align-items: center; padding-left: 11px; }
.avatar { width: 48px; height: 48px; border: 1px solid #333; border-radius: 50%; background: #fff; }
.gear { margin-left: 36px; }
.gear svg { width: 24px; height: 24px; }
.search { flex: 648 1 0; height: 48px; background: #fafafa; border: 1px solid #e2e2e2; border-radius: 6px; box-shadow: 0 1px 2px #ddd; display: flex; align-items: center; padding: 0 26px; color: #777; }
.search svg { width: 23px; height: 23px; }
.search input { flex: 1; margin-right: 18px; font-size: 21px; }
.search input::placeholder { color: #777; }
.docinfo { flex: 548 1 0; display: flex; align-items: center; justify-content: flex-end; padding-right: 25px; }
.titlechev svg { width: 14px; height: 14px; }
.titlechev { margin-right: 49px; }
.cloud { width: 26px; height: 24px; margin-right: 13px; }
.docname { font-size: 19px; margin-right: 37px; }
.excelicon { width: 30px; height: 30px; margin-right: 44px; }
.waffle svg { width: 25px; height: 25px; }

/* ribbon tabs */
.tabrow { display: flex; align-items: center; height: 46px; padding: 0 33px 0 11px; gap: 12px; font-size: 16px; }
.tabrow > button { height: 36px; border: 1px solid #d4d4d4; border-radius: 5px; background: #fff; gap: 9px; }
.tabrow > button > svg { width: 21px; height: 21px; }
.tabrow > button > .chev { width: 16px; height: 16px; color: inherit; }
.tabrow .share { width: 134px; background: #107c41; border-color: #107c41; color: #fff; }
.tabrow .edit { width: 131px; }
.tabrow .wave { width: 49px; }
.tabrow .comments { width: 114px; font-size: 17px; }
nav { flex: 1; margin-left: 168px; display: flex; justify-content: space-between; align-self: stretch; }
nav a { color: #424242; text-decoration: none; font-size: 19px; display: flex; align-items: center; border-bottom: 3px solid transparent; white-space: nowrap; }
nav a.current { font-weight: bold; color: #242424; border-color: #0f703b; font-size: 17px; }
nav a.design { font-weight: bold; color: #107c41; font-size: 17px; }

/* ribbon, grow factors leave out each group's own padding and border */
.ribbon { height: 60px; margin: 7px 13px 0 11px; background: #fff; border-radius: 10px; box-shadow: 0 2px 4px #ccc; display: flex; align-items: center; color: #333; }
.group { display: flex; align-items: center; justify-content: space-between; height: 44px; border-right: 1px solid #d0d0d0; min-width: 0; }
.collapse { flex: 77 1 0; padding-left: 15px; }
.low { margin-top: 12px; }
.more { flex: 60 1 0; justify-content: center; }
.addins { flex: 54 1 0; padding: 0 13px; }
.editing { flex: 199 1 0; padding: 0 14px 0 13px; }
.number { flex: 359 1 0; padding: 0 5px 0 16px; }
.align { flex: 174 1 0; padding: 0 16px; }
.font { flex: 611 1 0; padding: 0 5px 0 16px; }
.clipboard { flex: 171 1 0; padding: 0 24px 0 18px; border-right: 0; }
.ico { width: 26px; height: 28px; }
.dots { width: 28px; height: 8px; }
.pair { display: flex; align-items: center; gap: 10px; }
.pair.wide { gap: 16px; }
.currency { font-size: 20px; }
.pick { display: flex; align-items: center; position: relative; height: 42px; }
.pick .chev { position: absolute; left: 10px; }
.pick select { width: 100%; height: 100%; appearance: none; padding: 0 12px; }
.format { width: 193px; border: 1px solid #d4d4d4; border-radius: 5px; font-size: 20px; }
.bold { font-weight: bold; font-size: 26px; width: 28px; }
.fontbox { display: flex; width: 279px; border: 1px solid #d4d4d4; border-radius: 5px; font-size: 20px; }
.size { flex: 86 1 0; border-right: 1px solid #d4d4d4; height: 40px; }
.family { flex: 192 1 0; height: 40px; }
.family select { padding: 0 6px; }

/* formula bar */
.formularow { display: flex; margin: 6px 13px 7px 11px; gap: 13px; font-size: 18px; }
.box { height: 35px; border: 1px solid #d4d4d4; border-radius: 5px; background: #fff; display: flex; align-items: center; }
.formula { flex: 1; padding-left: 11px; gap: 12px; }
.formula input { flex: 1; font-family: "Liberation Sans", sans-serif; }
.fx { width: 129px; justify-content: space-between; padding: 0 12px 0 4px; color: #bbb; }
.fx i { color: #333; font-family: "Liberation Serif", serif; font-size: 20px; }
.tiny { width: 8px; height: 8px; color: #bbb; }
.mark { width: 24px; height: 20px; }
.namebox { width: 186px; padding: 0 6px 0 4px; }
.namebox input { flex: 1; width: 50px; text-align: right; }

/* sheet */
.sheet { flex: 1 1 0; min-height: 0; display: flex; }
.tablewrap { flex: 1; min-width: 0; display: flex; flex-direction: column; }
.viewport { flex: 1 1 0; min-height: 0; overflow: hidden; }
table { width: 100%; height: 100%; table-layout: fixed; border-collapse: separate; border-spacing: 0; font-family: "Liberation Sans", Arial, sans-serif; font-size: 13px; line-height: 15px; color: #000; }
.c-num { width: 38px; }
.c-1 { width: 81px; }
.c-2 { width: 245px; }
.c-3 { width: 261px; }
.c-4 { width: 275px; }
.c-5 { width: 211px; }
.c-6 { width: 204px; }
.c-7 { width: 272px; }
.c-8 { width: 223px; }
.c-9 { width: 65px; }
th, td { padding: 0; }
thead th { height: 27px; background: linear-gradient(#f5f5f5 10px, #c8ead7 10px); border-bottom: 1px solid #1e7e48; border-right: 1px solid #b2d8c4; vertical-align: bottom; text-align: left; font-weight: normal; color: #1a7443; font-family: "Noto Sans", sans-serif; font-size: 11px; }
thead th.corner { background: #f5f5f5; border-right: 1px solid #bbb; border-bottom: 1px solid #bbb; }
.corner svg { width: 10px; height: 10px; margin: 0 3px 3px auto; }
thead th.letter { text-align: center; }
.head { position: relative; padding-left: 2px; white-space: nowrap; }
.filter { position: absolute; right: 2px; bottom: 2px; width: 25px; height: 24px; background: #fff; border: 1px solid #888; border-top: 0; border-radius: 0 0 3px 3px; color: #777; }
.filter svg { width: 11px; height: 11px; }
td { border-right: 1px solid #000; vertical-align: bottom; }
tbody td { background-color: #fff; }
td.blank { border-right: 1px solid #d8d8d8; }
td.blank:last-child { border-right: 0; }
.rownum { background: #f5f5f5; border-right: 1px solid #bbb; text-align: right; padding-right: 4px; font-weight: normal; font-size: 12px; color: #777; }
.celltext { white-space: pre; padding: 0 0 14px 2px; }
.d-1 .celltext { padding-bottom: 0; }
tbody td.d-8 { background-color: #00b050; }
.d-8 .celltext { text-align: center; }
.first { height: 315px; }
.first .rownum { padding-bottom: 22px; }
.first .d-4 .celltext { padding-bottom: 48px; font-size: 12px; }
.first .d-7 .celltext { font-size: 12px; }
.selected { height: 154px; }
.selected td { background-color: #add8e2; background-image: linear-gradient(#1e7145 1px, #fff 1px, #fff 3px, transparent 3px); border-bottom: 1px solid #fff; }
.selected td.d-1 { background-color: #c0e3f6; }
.selected td.d-8 { background-color: #05aa4e; }
.selected td.blank { background-color: #e6f2ec; }
.selected .rownum { background: #107c41; color: #fff; font-weight: bold; font-size: 13px; border-color: #107c41; }
.selected .celltext { padding-bottom: 12px; }
.selected .d-1 .celltext { padding-bottom: 0; line-height: 13px; }
.steps { font-family: "Noto Sans", sans-serif; font-size: 11px; line-height: 18px; padding: 0 0 14px 2px; white-space: nowrap; }
.link { color: #e0201b; }
.last .rownum { background-image: linear-gradient(#107c41 3px, transparent 3px); }
.last td { background-image: linear-gradient(#1e7145 1px, #e2f3ea 1px, #e2f3ea 2px, #000 2px, #000 3px, transparent 3px); }
.last td.d-8 { background-image: linear-gradient(#1e7145 1px, #05aa4e 1px, #05aa4e 2px, #000 2px, #000 3px, transparent 3px); }
.last td.blank { background-image: linear-gradient(#1e7145 1px, #fff 1px, #fff 2px, #d8d8d8 2px, #d8d8d8 3px, transparent 3px); }
.last .celltext { padding-bottom: 5px; font-family: "Noto Sans", sans-serif; font-size: 11px; }
.hscroll { height: 18px; background: #e8e8e8; display: flex; align-items: center; padding: 0 4px; gap: 8px; }
.hscroll svg { width: 9px; height: 12px; }
.hscroll .thumb { flex: 41 1 0; height: 10px; border-radius: 5px; background: #8a8a8a; }
.hscroll .rest { flex: 29 1 0; }
.vscroll { width: 19px; background: #e8e8e8; display: flex; flex-direction: column; align-items: center; padding: 5px 0 22px; }
.vscroll svg { width: 12px; height: 10px; }
.vscroll .track { flex: 1; display: flex; flex-direction: column; }
.vscroll .thumb { width: 10px; height: 27%; margin-top: 131px; border-radius: 5px; background: #8a8a8a; }

.sheettabs { height: 50px; border-bottom: 1px solid #ddd; display: flex; align-items: stretch; padding-left: 15px; color: #333; }
.sheettabs svg { width: 18px; height: 18px; }
.sheettabs .nav { color: #bbb; margin-right: 32px; }
.sheettabs .nav svg { width: 16px; height: 16px; }
.sheettabs .sheetname { font-weight: bold; font-size: 16px; border-bottom: 4px solid #1f7246; margin: 0 28px; }

.status { height: 32px; background: #fff; display: flex; align-items: center; padding: 0 31px 0 32px; font-size: 17px; color: #333; }
.status button svg { width: 18px; height: 18px; }
.status .plus { margin: 0 15px 0 30px; }
.pick.zoom { width: 87px; height: 27px; border: 1px solid #ccc; border-radius: 5px; margin-right: 15px; }
.pick.zoom select { padding: 0 6px; }
.status .feedback { margin: 0 28px; }
.status .feedback svg, .status .keys svg { width: 22px; height: 20px; }
.status .keys { margin: 0 19px 0 28px; }
.count { margin-left: 18px; padding-top: 4px; color: #666; font-size: 17px; }
.stats { margin-left: auto; padding-top: 4px; color: #555; font-size: 17px; }

/* taskbar */
.taskbar { height: 60px; background: #2e3b3d; display: flex; align-items: stretch; color: #fff; }
.start { width: 72px; background: #263438; }
.start svg { width: 24px; height: 24px; }
.tasksearch { width: 432px; background: #f2f2f2; border: 2px solid #bfbfbf; border-right: 0; display: flex; align-items: center; padding-left: 16px; color: #222; overflow: hidden; }
.lens { width: 24px; height: 24px; }
.tasksearch input { flex: 1; min-width: 0; margin-left: 18px; font-size: 21px; }
.tasksearch input::placeholder { color: #333; }
.scene { width: 112px; height: 60px; }
.taskview { width: 76px; }
.taskview svg { width: 24px; height: 24px; }
.apps { display: flex; width: 677px; }
.apps button { flex: 1; position: relative; }
.apps button > svg { width: 36px; height: 36px; }
.apps .open::after { content: ""; position: absolute; left: 6px; right: 7px; bottom: 0; height: 3px; background: #f2b6cd; }
.apps .current { background: #5a6769; }
.apps .current::after { left: 0; right: 0; }
.badge { position: absolute; right: 6px; bottom: 5px; width: 24px; height: 24px; border-radius: 50%; border: 1px solid #9aa; background: #2e3b3d; font-size: 16px; line-height: 22px; text-align: center; }
.scroller { width: 27px; margin-left: 3px; background: #f0f0f0; color: #444; display: flex; flex-direction: column; align-items: center; justify-content: space-between; padding: 7px 0; }
.scroller svg { width: 14px; height: 14px; }
.up { transform: rotate(180deg); }
.weather { display: flex; align-items: center; gap: 15px; margin-left: 37px; position: relative; font-size: 20px; }
.weather svg { width: 30px; height: 30px; }
.alert { position: absolute; left: 15px; top: 12px; width: 18px; height: 18px; border-radius: 50%; background: #c42b1c; font-size: 13px; line-height: 18px; text-align: center; }
.tray { margin-left: auto; display: flex; align-items: center; padding-right: 8px; border-right: 1px solid #8a9496; margin-right: 6px; }
.tray > svg { width: 24px; height: 24px; margin-right: 24px; }
.tray > svg.up { width: 18px; height: 18px; margin-right: 27px; }
.lang { width: 50px; font-size: 17px; }
.clock { width: 92px; text-align: center; font-size: 17px; line-height: 28px; }
.notify { width: 60px; height: 60px; position: relative; margin-left: 12px; }
.notify svg { width: 24px; height: 24px; margin-right: 10px; }

.watermark { position: absolute; left: 0; right: 0; bottom: 0; display: flex; flex-direction: column; align-items: center; color: rgba(216, 216, 216, .85); pointer-events: none; font-weight: bold; }
.mark-ar { font-size: 64px; line-height: 70px; font-family: "DejaVu Sans", sans-serif; }
.mark-en { font-size: 34px; line-height: 44px; }
</style>
